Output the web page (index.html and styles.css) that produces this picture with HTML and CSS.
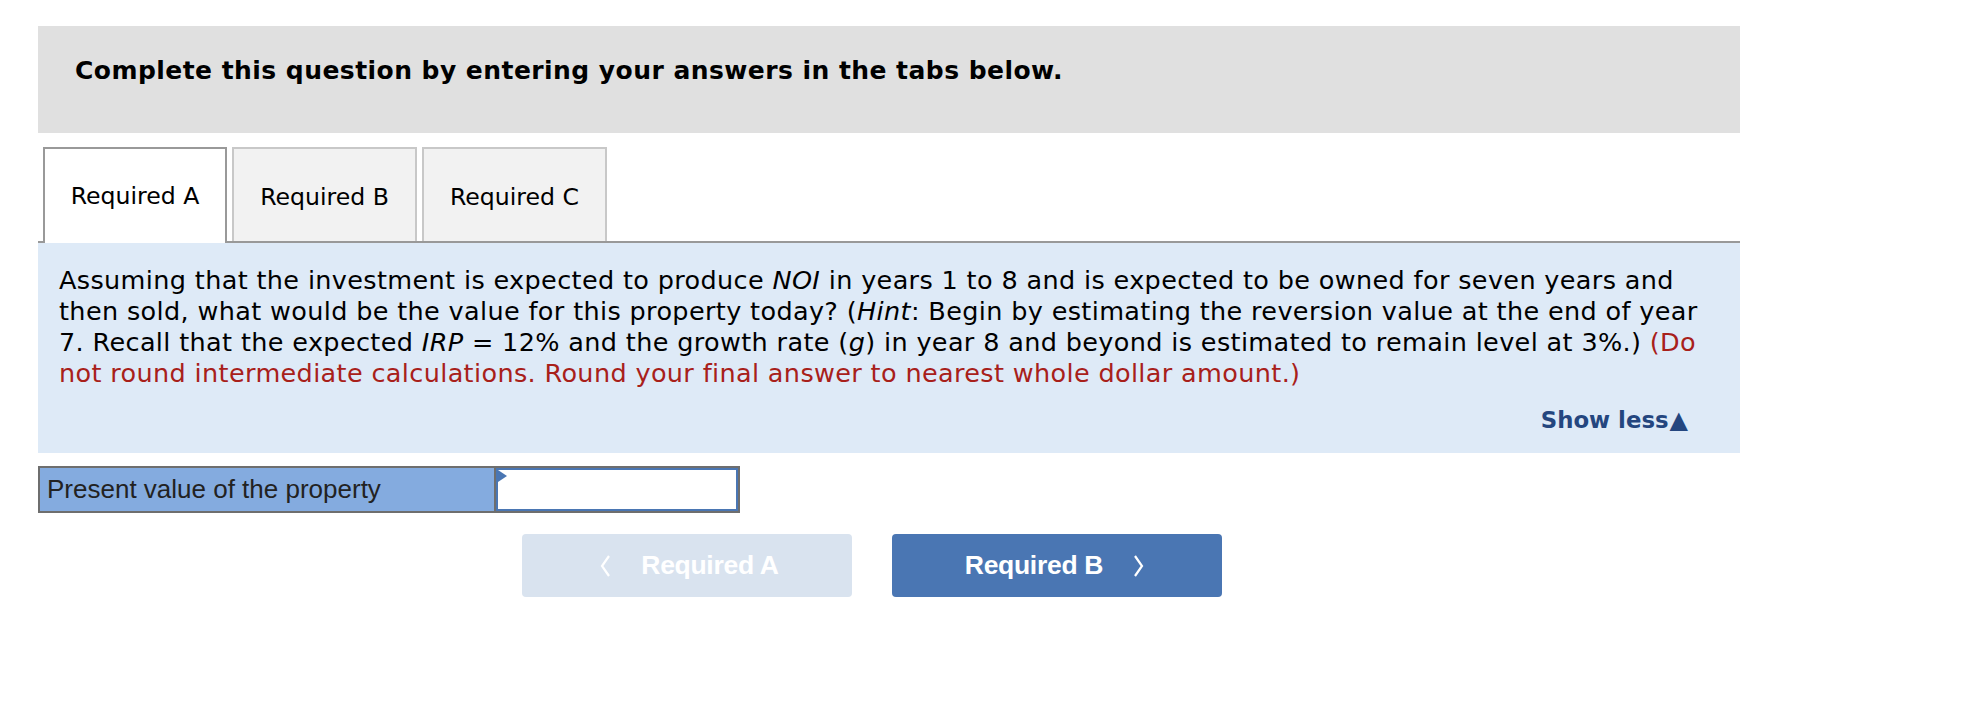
FILE: index.html
```html
<!DOCTYPE html>
<html>
<head>
<meta charset="utf-8">
<link rel="stylesheet" href="styles.css">
</head>
<body>
<div class="page">
  <div class="banner">Complete this question by entering your answers in the tabs below.</div>

  <div class="tabs">
    <div class="tab active">Required A</div>
    <div class="tab">Required B</div>
    <div class="tab">Required C</div>
  </div>

  <div class="panel">
    <p class="question">Assuming that the investment is expected to produce <i>NOI</i> in years 1 to 8 and is expected to be owned for seven years and<br>then sold, what would be the value for this property today? (<i>Hint</i>: Begin by estimating the reversion value at the end of year<br>7. Recall that the expected <i>IRP</i> = 12% and the growth rate (<i>g</i>) in year 8 and beyond is estimated to remain level at 3%.) <span class="red">(Do<br>not round intermediate calculations. Round your final answer to nearest whole dollar amount.)</span></p>
    <div class="showless">Show less<span class="tri">&#9650;</span></div>
  </div>

  <div class="answer">
    <div class="label">Present value of the property</div>
    <div class="cell">
      <div class="input"><span class="flag"></span></div>
    </div>
  </div>

  <div class="nav">
    <div class="btn prev">
      <svg width="12" height="24" viewBox="0 0 12 24"><polyline points="10,2 3,12 10,22" fill="none" stroke="#fff" stroke-width="2.2"/></svg>
      <span>Required A</span>
    </div>
    <div class="btn next">
      <span>Required B</span>
      <svg width="12" height="24" viewBox="0 0 12 24"><polyline points="2,2 9,12 2,22" fill="none" stroke="#fff" stroke-width="2.2"/></svg>
    </div>
  </div>
</div>
</body>
</html>
```

FILE: styles.css
```css
html, body {
  margin: 0;
  padding: 0;
  background: #fff;
}
.page {
  width: 1702px;
  margin-left: 38px;
  padding-top: 26px;
  font-family: "DejaVu Sans", Verdana, sans-serif;
  color: #000;
}
.banner {
  box-sizing: border-box;
  height: 107px;
  background: #e0e0e0;
  padding: 30px 0 0 37px;
  font-size: 25px;
  letter-spacing: 0.45px;
  line-height: 30px;
  font-weight: bold;
}
.tabs {
  display: flex;
  gap: 5px;
  margin-top: 14px;
  padding-left: 5px;
  height: 94px;
  border-bottom: 2px solid #999;
}
.tab {
  box-sizing: border-box;
  width: 185px;
  height: 94px;
  display: flex;
  align-items: center;
  justify-content: center;
  padding-top: 4px;
  background: #f2f2f2;
  border: 2px solid #c8c8c8;
  border-bottom: none;
  font-size: 23.6px;
}
.tab.active {
  width: 184px;
  height: 96px;
  background: #fff;
  border-color: #999;
  padding-top: 2px;
  padding-bottom: 2px;
  position: relative;
  z-index: 1;
}
.panel {
  background: #deeaf7;
  padding: 22px 21px 18px 21px;
}
.question {
  margin: 0;
  font-size: 25.5px;
  letter-spacing: 0.36px;
  line-height: 31px;
  white-space: nowrap;
}
.red {
  color: #a8201a;
}
.showless {
  margin-top: 16px;
  text-align: right;
  padding-right: 31px;
  font-size: 22.8px;
  line-height: 30px;
  font-weight: bold;
  color: #24467f;
}
.tri {
  font-size: 24px;
  margin-left: 1px;
}
.answer {
  box-sizing: border-box;
  display: flex;
  width: 702px;
  height: 47px;
  margin-top: 13px;
  border: 2px solid #6e6e6e;
}
.label {
  box-sizing: border-box;
  width: 454px;
  background: #84abdf;
  padding-left: 7px;
  font-family: "Liberation Sans", Arial, sans-serif;
  font-size: 26px;
  line-height: 43px;
  color: #222;
}
.cell {
  flex: 1;
  border-left: 2px solid #6e6e6e;
}
.input {
  position: relative;
  box-sizing: border-box;
  height: 100%;
  border: 2px solid #4a76b3;
  background: #fff;
}
.flag {
  position: absolute;
  left: 0;
  top: 0;
  width: 0;
  height: 0;
  border-top: 6px solid transparent;
  border-bottom: 6px solid transparent;
  border-left: 9px solid #4a76b3;
}
.nav {
  display: flex;
  gap: 40px;
  margin-top: 21px;
  margin-left: 484px;
}
.btn {
  box-sizing: border-box;
  width: 330px;
  height: 63px;
  border-radius: 4px;
  display: flex;
  align-items: center;
  justify-content: center;
  gap: 30px;
  font-family: "Liberation Sans", Arial, sans-serif;
  font-weight: bold;
  font-size: 26.5px;
  letter-spacing: -0.3px;
  color: #fff;
}
.btn.prev {
  background: #d9e3ef;
  padding-left: 4px;
}
.btn.next {
  background: #4a76b3;
  padding-right: 4px;
}
```
